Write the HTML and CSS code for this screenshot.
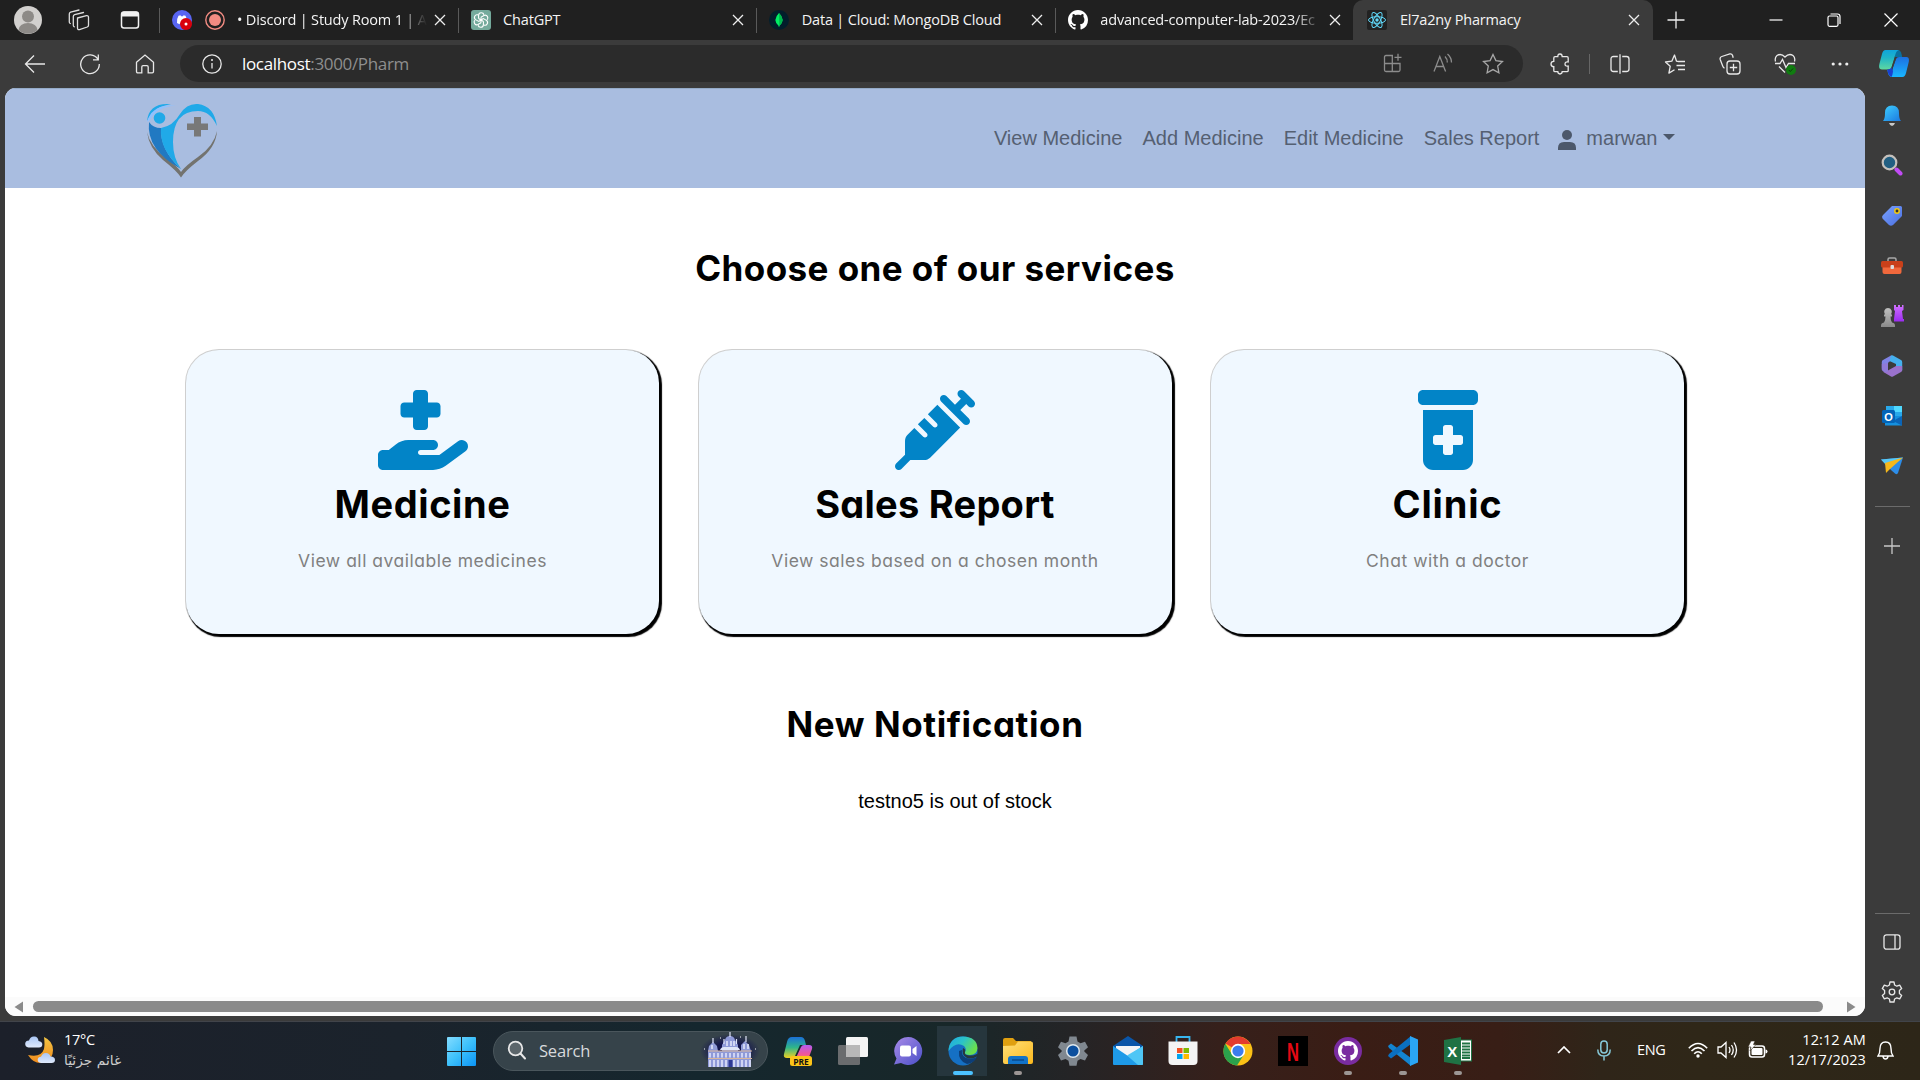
FILE: index.html
```html
<!DOCTYPE html>
<html lang="en">
<head>
<meta charset="utf-8">
<title>El7a2ny Pharmacy</title>
<link rel="stylesheet" href="styles.css">
</head>
<body>
<svg class="defs" width="0" height="0">
  <defs>
    <symbol id="x" viewBox="0 0 12 12"><path d="M1 1l10 10M11 1L1 11" fill="none" stroke="#eee" stroke-width="1.3"/></symbol>
    <symbol id="gh" viewBox="0 0 16 16"><path d="M8 0C3.58 0 0 3.58 0 8c0 3.54 2.29 6.53 5.47 7.59.4.07.55-.17.55-.38 0-.19-.01-.82-.01-1.49-2.01.37-2.53-.49-2.69-.94-.09-.23-.48-.94-.82-1.13-.28-.15-.68-.52-.01-.53.63-.01 1.08.58 1.23.82.72 1.21 1.87.87 2.33.66.07-.52.28-.87.51-1.07-1.78-.2-3.64-.89-3.64-3.95 0-.87.31-1.59.82-2.15-.08-.2-.36-1.02.08-2.12 0 0 .67-.21 2.2.82.64-.18 1.32-.27 2-.27s1.36.09 2 .27c1.53-1.04 2.2-.82 2.2-.82.44 1.1.16 1.92.08 2.12.51.56.82 1.27.82 2.15 0 3.07-1.87 3.75-3.65 3.95.29.25.54.73.54 1.48 0 1.07-.01 1.93-.01 2.2 0 .21.15.46.55.38A8.01 8.01 0 0 0 16 8c0-4.42-3.58-8-8-8"/></symbol>
    <linearGradient id="gTeal" x1="0" y1="0" x2="0" y2="1"><stop offset="0" stop-color="#0fa4dc"/><stop offset=".4" stop-color="#1fb4c8"/><stop offset="1" stop-color="#5fd8a0"/></linearGradient>
    <linearGradient id="gBlue" x1="0" y1="0" x2="0" y2="1"><stop offset="0" stop-color="#1d6fe0"/><stop offset="1" stop-color="#19b6ff"/></linearGradient>
    <linearGradient id="gBell" x1="0" y1="0" x2="1" y2="1"><stop offset="0" stop-color="#3fd0ff"/><stop offset="1" stop-color="#1a78e0"/></linearGradient>
    <linearGradient id="gPurple" x1="0" y1="0" x2="0" y2="1"><stop offset="0" stop-color="#d070ff"/><stop offset="1" stop-color="#9a2cf0"/></linearGradient>
    <linearGradient id="gGrey" x1="0" y1="0" x2="0" y2="1"><stop offset="0" stop-color="#c0c0c0"/><stop offset="1" stop-color="#8a8a8a"/></linearGradient>
    <linearGradient id="gWin" gradientUnits="userSpaceOnUse" x1="0" y1="0" x2="29" y2="29"><stop offset="0" stop-color="#83dcff"/><stop offset=".5" stop-color="#3cc0fb"/><stop offset="1" stop-color="#0b93f5"/></linearGradient>
    <linearGradient id="gChat" x1="0" y1="0" x2="1" y2="1"><stop offset="0" stop-color="#a98be8"/><stop offset="1" stop-color="#4a4fc8"/></linearGradient>
    <linearGradient id="gEdge" x1="0" y1="0" x2="1" y2="0.5"><stop offset="0" stop-color="#1fa8e4"/><stop offset=".5" stop-color="#2bc3c8"/><stop offset="1" stop-color="#6be04c"/></linearGradient>
    <linearGradient id="gFolder" x1="0" y1="0" x2="1" y2="1"><stop offset="0" stop-color="#ffe07a"/><stop offset="1" stop-color="#fbb81c"/></linearGradient>
    <linearGradient id="gMoon" x1="0" y1="0" x2="0" y2="1"><stop offset="0" stop-color="#f2c544"/><stop offset="1" stop-color="#f08a1c"/></linearGradient>
    <linearGradient id="gCloud" x1="0" y1="0" x2="0" y2="1"><stop offset="0" stop-color="#a9c6f5"/><stop offset="1" stop-color="#dfe9fb"/></linearGradient>
    <linearGradient id="gCopilot" x1="0" y1="0" x2="0" y2="1"><stop offset="0" stop-color="#1b6fd8"/><stop offset=".5" stop-color="#2fb68a"/><stop offset="1" stop-color="#f0d020"/></linearGradient>
    <linearGradient id="gCopilot2" x1="0" y1="0" x2="0" y2="1"><stop offset="0" stop-color="#b35cf0"/><stop offset=".6" stop-color="#f0569a"/><stop offset="1" stop-color="#f98a4a"/></linearGradient>
    <linearGradient id="gTag" x1="0" y1="0" x2="1" y2="1"><stop offset="0" stop-color="#7aa2ff"/><stop offset="1" stop-color="#4a6fe0"/></linearGradient>
    <radialGradient id="gNight"><stop offset=".5" stop-color="#14164e"/><stop offset="1" stop-color="#14164e" stop-opacity="0"/></radialGradient>
  </defs>
</svg>

<header class="tabstrip">
  <div class="tab-tools">
    <span class="tool"><svg width="28" height="28" viewBox="0 0 28 28"><circle cx="14" cy="14" r="14" fill="#d2d0ce"/><circle cx="14" cy="10.5" r="6" fill="#8d8a87"/><path d="M4.500 24a9.500 7 0 0 1 19 0a14 14 0 0 1-19 0z" fill="#8d8a87"/></svg></span>
    <span class="tool"><svg width="22" height="22" viewBox="0 0 22 22" fill="none" stroke="#ddd" stroke-width="1.300" stroke-linejoin="round" stroke-linecap="round"><path d="M9.500 9l9-2.300q2-.3 2 1.500v8q0 1.300-1.300 1.800l-7.700 2.600q-2 .4-2-1.500z"/><path d="M6.300 17.800q-1-.4-1-1.600V7.500q0-1.300 1.300-1.800L15.500 3.500"/><path d="M2.300 14.500q-1-.4-1-1.600V5q0-1.300 1.300-1.800L11 1"/></svg></span>
    <span class="tool"><svg width="20" height="20" viewBox="0 0 20 20"><rect x="1.500" y="2" width="17" height="16" rx="2.500" fill="none" stroke="#f2f2f2" stroke-width="1.5"/><path d="M1.500 3.500q0-2 2.500-2h12q2.500 0 2.500 2V6.500h-17z" fill="#f2f2f2"/></svg></span>
  </div>
  <div class="tab">
    <svg class="fav" width="20" height="20" viewBox="0 0 20 20"><circle cx="10" cy="10" r="10" fill="#5865f2"/><path d="M5 13q-.5-4 1.500-7.200l2-.6.500 1h2l.5-1 2 .6Q15.500 9 15 13l-2.500 1.200-.6-1H8.100l-.6 1z" fill="#fff"/><circle cx="14" cy="14" r="6" fill="#d9000c"/><circle cx="14" cy="14" r="1.500" fill="#fff"/></svg>
    <svg class="fav" width="20" height="20" viewBox="0 0 20 20"><circle cx="10" cy="10" r="9.200" fill="none" stroke="#f28b82" stroke-width="1.400"/><circle cx="10" cy="10" r="6" fill="#f28b82"/></svg>
    <span class="title fade">• Discord | Study Room 1 | A</span>
    <svg class="close" width="12" height="12"><use href="#x"/></svg>
  </div>
  <div class="tab">
    <svg class="fav" width="20" height="20" viewBox="0 0 20 20"><rect width="20" height="20" rx="3" fill="#74aa9c"/><g fill="none" stroke="#fff" stroke-width="1.100"><path id="petal" d="M10 7.200l3-1.700a2.700 2.700 0 0 1 3 4.400M10 7.200v3.400"/><use href="#petal" transform="rotate(60 10 10)"/><use href="#petal" transform="rotate(120 10 10)"/><use href="#petal" transform="rotate(180 10 10)"/><use href="#petal" transform="rotate(240 10 10)"/><use href="#petal" transform="rotate(300 10 10)"/></g></svg>
    <span class="title">ChatGPT</span>
    <svg class="close" width="12" height="12"><use href="#x"/></svg>
  </div>
  <div class="tab">
    <svg class="fav" width="20" height="20" viewBox="0 0 20 20"><circle cx="10" cy="10" r="10" fill="#021e2b"/><path d="M10 3q7 7 .3 13v1h-.6v-1Q3 10 10 3z" fill="#00ed64"/><path d="M10 3q7 7 .3 13z" fill="#00b84c"/></svg>
    <span class="title">Data | Cloud: MongoDB Cloud</span>
    <svg class="close" width="12" height="12"><use href="#x"/></svg>
  </div>
  <div class="tab">
    <svg class="fav" width="20" height="20" fill="#fff"><use href="#gh"/></svg>
    <span class="title fade repo">advanced-computer-lab-2023/Ec</span>
    <svg class="close" width="12" height="12"><use href="#x"/></svg>
  </div>
  <div class="tab active">
    <svg class="fav" width="20" height="20" viewBox="0 0 20 20"><rect width="20" height="20" rx="2" fill="#222"/><g fill="none" stroke="#61dafb" stroke-width="1"><ellipse cx="10" cy="10" rx="8.500" ry="3.300"/><ellipse cx="10" cy="10" rx="8.500" ry="3.300" transform="rotate(60 10 10)"/><ellipse cx="10" cy="10" rx="8.500" ry="3.300" transform="rotate(120 10 10)"/></g><circle cx="10" cy="10" r="1.700" fill="#61dafb"/></svg>
    <span class="title">El7a2ny Pharmacy</span>
    <svg class="close" width="12" height="12"><use href="#x"/></svg>
  </div>
  <svg class="newtab" width="18" height="18" viewBox="0 0 18 18"><path d="M9 .5v17M.5 9h17" stroke="#eee" stroke-width="1.300"/></svg>
  <div class="window-controls">
    <span><svg width="14" height="14" viewBox="0 0 14 14"><path d="M.5 7h13" stroke="#fff" stroke-width="1.200"/></svg></span>
    <span><svg width="14" height="14" viewBox="0 0 14 14" fill="none" stroke="#fff" stroke-width="1.200"><rect x="1" y="3" width="10" height="10.300" rx="1.500"/><path d="M3.500 1h7q2.500 0 2.500 2.500v7.500"/></svg></span>
    <span><svg width="14" height="14" viewBox="0 0 14 14"><path d="M.5.5l13 13M13.500.5l-13 13" stroke="#fff" stroke-width="1.200"/></svg></span>
  </div>
</header>

<div class="toolbar">
  <div class="nav-buttons">
    <span class="cell"><svg width="22" height="20" viewBox="0 0 22 20"><path d="M10 1.500L1.500 10l8.500 8.500M1.500 10H21" class="ln"/></svg></span>
    <span class="cell"><svg width="22" height="22" viewBox="0 0 22 22"><path d="M19 6.500A9.300 9.300 0 1 0 20.300 11M19.300 1.500v5.300H14" class="ln"/></svg></span>
    <span class="cell"><svg width="20" height="20" viewBox="0 0 20 20"><path d="M1.500 8.300L10 1l8.500 7.300V17.500q0 1.300-1.300 1.300H13.200V13q0-1.300-1.300-1.300H8.100Q6.800 11.700 6.800 13v5.800H2.800Q1.500 18.800 1.500 17.500z" class="ln"/></svg></span>
  </div>
  <div class="address">
    <svg width="20" height="20" viewBox="0 0 20 20"><circle cx="10" cy="10" r="9.200" class="ln"/><path d="M10 9v5.500" class="ln"/><circle cx="10" cy="6" r="1" fill="#eee"/></svg>
    <span class="url">localhost<i>:3000/Pharm</i></span>
    <div class="address-icons">
      <span><svg width="20" height="20" viewBox="0 0 20 20"><path d="M10 2.500H3Q1.500 2.500 1.500 4V17q0 1.500 1.500 1.500h12.500q1.500 0 1.500-1.500V10.500H1.500M9.300 2.500v16M15 0.800v7M11.500 4.300h7" class="ln dim"/></svg></span>
      <span><svg width="20" height="20" viewBox="0 0 20 20"><path d="M1 18.500L6.800 3.500 12.600 18.500M3 13.500h7.600M12 3.500q2.500 2.500 2.300 6M14.500 1q4 3.500 4 8.500" class="ln dim"/></svg></span>
      <span><svg width="22" height="22" viewBox="0 0 22 22"><path d="M11 1.500l2.900 6.100 6.600.9-4.800 4.600 1.200 6.700-5.900-3.200-5.900 3.200 1.200-6.700L1.500 8.500l6.600-.9z" class="ln dim2"/></svg></span>
    </div>
  </div>
  <div class="actions">
    <span class="cell"><svg width="20" height="22" viewBox="0 0 20 22"><path d="M5 3.700h2.800Q7.800 1 10 1t2.200 2.700H17q1.200 0 1.200 1.200v4q-3.200-.5-3.200 2.100t3.200 2.100v4.300q0 1.200-1.200 1.200h-4.800q0 2.400-2.200 2.400t-2.200-2.400H5q-1.200 0-1.200-1.200v-3.700Q1 13.700 1 11t2.800-2.700V4.900q0-1.200 1.200-1.200z" class="ln"/></svg></span>
    <i class="sep"></i>
    <span class="cell"><svg width="20" height="20" viewBox="0 0 20 20"><path d="M7.800 2.500H3.500Q1 2.500 1 5v10q0 2.500 2.500 2.500h4.300M12.200 2.500h4.300Q19 2.500 19 5v10q0 2.500-2.500 2.500h-4.300" class="ln"/><path d="M10 .3v19.400" class="ln"/></svg></span>
    <span class="cell"><svg width="22" height="22" viewBox="0 0 22 22"><path d="M14.500 8.500l-2-.3L10.500 2 7.800 8.200l-6.300.8 4.700 4.300-1.300 6.800 5.600-3.300M13.500 8.500H21M12.500 12.500H21M14 16.500h7" class="ln" stroke-linejoin="round"/></svg></span>
    <span class="cell"><svg width="22" height="22" viewBox="0 0 22 22"><rect x="8" y="8" width="13" height="13" rx="3" class="ln"/><path d="M14.500 10.800v7.400M10.800 14.500h7.400M5.500 15.300Q4.300 14.500 3.700 13L1.200 6.500q-.6-2.300 1.600-3L10.800.9q2-.4 2.700 1.400l.7 2.500" class="ln"/></svg></span>
    <span class="cell"><svg width="22" height="22" viewBox="0 0 22 22"><path d="M1.500 8.500Q.5 4.500 3 2.500q4-2.500 8 1.500 4-4 8-1.500 2.500 2 1.500 6M5 13.500l6 6M1 10.500h5l2.500-4 3.500 8 2.500-4H21" class="ln"/><circle cx="17" cy="17" r="5" fill="#107c10"/><path d="M14.800 17l1.500 1.500 2.700-3" stroke="#0a3d0a" fill="none"/></svg></span>
    <span class="cell"><svg width="18" height="6" viewBox="0 0 18 6" fill="#eee"><circle cx="2.200" cy="3" r="1.600"/><circle cx="9" cy="3" r="1.600"/><circle cx="15.800" cy="3" r="1.600"/></svg></span>
    <span class="copilot"><svg width="30" height="27" viewBox="0 0 30 27"><path d="M15 0h4q2.500 0 3.500 4l.7 3h-7z" fill="#0a6f9e"/><path d="M23.500 27H13q-3 0-4-4l-.7-3H13L17 9q1-2 3-2h7.500q3.500 0 2 6L27 23q-1 4-3.500 4z" fill="url(#gBlue)"/><path d="M6.500 0H20q-2.500.5-3.500 4L12.500 17.500q-.8 2-3 2H3q-4 0-2.500-6L3 4Q4 0 6.500 0z" fill="url(#gTeal)"/><path d="M8.300 19.500q3.700 0 4.700-3l1 5q-.5 4-1.500 5.400Q9 26 8.300 19.500z" fill="#1a3fd0"/><path d="M17 8.500l-4 12-.3-3.500L16 7.300z" fill="#3b3b3b"/></svg></span>
  </div>
</div>

<div class="browser-body">
  <main class="page">
    <nav class="navbar">
      <svg class="logo" width="72" height="76" viewBox="0 0 72 76">
        <path d="M1 30Q3 46 17 58q14 11 18 17.500Q39 69 52 59 70 46 71 29 68 44 52 55 39 64 35 70 31 64 20 56 4 44 1 30z" fill="#73736f"/>
        <path d="M3 20Q0 48 35 67 14 48 15 26 7 26 3 20z" fill="#2179c2"/>
        <path d="M15 26Q27 24 34 12 41 1 52 2 68 4 71 24 64 9 52 9 27 9 27 40q0 16 8 27Q13 47 15 26z" fill="#20a9e8"/>
        <path d="M1 19Q3 2 21 2l4 .7Q9 3 1 19z" fill="#20a9e8"/><path d="M1 20Q5 5 22 3.500h8Q10 5 4 18z" fill="#8fc1ff"/>
        <circle cx="13.500" cy="16" r="5.800" fill="#20a9e8"/>
        <path d="M48 15h7v6.500h7V28h-7v6.500h-7V28h-7v-6.500h7z" fill="#787878"/>
      </svg>
      <div class="links">
        <a>View Medicine</a><a>Add Medicine</a><a>Edit Medicine</a><a>Sales Report</a>
        <a class="user"><svg width="18" height="20" viewBox="0 0 18 20" fill="#4c586b"><circle cx="9" cy="5" r="5"/><path d="M0 20v-2q0-6 6-6h6q6 0 6 6v2z"/></svg>marwan<i class="caret"></i></a>
      </div>
    </nav>
    <section class="content">
      <h2 class="choose">Choose one of our services</h2>
      <div class="cards">
        <article class="card medicine">
          <svg width="90" height="80" viewBox="0 0 576 512"><path d="M224 24V80H168c-13.300 0-24 10.700-24 24v48c0 13.300 10.700 24 24 24h56v56c0 13.300 10.700 24 24 24h48c13.300 0 24-10.700 24-24V176h56c13.300 0 24-10.700 24-24V104c0-13.300-10.700-24-24-24H320V24c0-13.300-10.700-24-24-24H248c-13.300 0-24 10.700-24 24zM559.700 392.200c17.800-13.100 21.600-38.100 8.500-55.900s-38.100-21.600-55.900-8.500L392.600 416H272c-8.800 0-16-7.200-16-16s7.200-16 16-16h16 64c17.700 0 32-14.300 32-32s-14.300-32-32-32H288 272 193.700c-29.100 0-57.300 9.900-80 28L68.800 384H32c-17.700 0-32 14.300-32 32v64c0 17.700 14.300 32 32 32H192 352.500c29 0 57.300-9.300 80.700-26.500l126.600-93.300z"/></svg>
          <h3>Medicine</h3>
          <p>View all available medicines</p>
        </article>
        <article class="card sales">
          <svg width="80" height="80" viewBox="0 0 512 512"><path d="M441 7l32 32 32 32c9.400 9.400 9.400 24.600 0 33.900s-24.600 9.400-33.900 0l-15-15L417.900 128l55 55c9.400 9.400 9.400 24.600 0 33.900s-24.600 9.400-33.900 0l-72-72L295 73c-9.400-9.400-9.400-24.600 0-33.900s24.600-9.400 33.900 0l55 55L422.100 56 407 41c-9.400-9.400-9.400-24.600 0-33.900s24.600-9.400 33.900 0zM210.300 155.700l61.100-61.100c.3 .3 .6 .7 1 1l16 16 56 56 56 56 16 16c.3 .3 .6 .6 1 1l-191 191c-10.500 10.500-24.700 16.400-39.600 16.400H97.900L41 505c-9.400 9.400-24.600 9.400-33.900 0s-9.400-24.600 0-33.900l57-57V325.300c0-14.900 5.900-29.100 16.400-39.600l43.300-43.300 57 57c6.200 6.200 16.400 6.200 22.600 0s6.200-16.400 0-22.600l-57-57 41.400-41.400 57 57c6.200 6.200 16.400 6.200 22.600 0s6.200-16.400 0-22.600l-57-57z"/></svg>
          <h3>Sales Report</h3>
          <p>View sales based on a chosen month</p>
        </article>
        <article class="card clinic">
          <svg width="60" height="80" viewBox="0 0 384 512"><path d="M0 32C0 14.300 14.300 0 32 0H352c17.700 0 32 14.300 32 32V64c0 17.700-14.300 32-32 32H32C14.300 96 0 81.700 0 64V32zm32 96H352V448c0 35.300-28.700 64-64 64H96c-35.300 0-64-28.700-64-64V128zM160 240v48H112c-8.800 0-16 7.200-16 16v32c0 8.800 7.200 16 16 16h48v48c0 8.800 7.200 16 16 16h32c8.800 0 16-7.200 16-16V352h48c8.800 0 16-7.200 16-16V304c0-8.800-7.200-16-16-16H224V240c0-8.800-7.200-16-16-16H176c-8.800 0-16 7.200-16 16z"/></svg>
          <h3>Clinic</h3>
          <p>Chat with a doctor</p>
        </article>
      </div>
      <h2 class="notif">New Notification</h2>
      <p class="stock">testno5 is out of stock</p>
    </section>
    <div class="hscroll">
      <svg width="9" height="12" viewBox="0 0 9 12"><path d="M9 .5v11L0.500 6z" fill="#8a8a8a"/></svg>
      <div class="thumb"></div>
      <svg width="9" height="12" viewBox="0 0 9 12"><path d="M0 .5v11L8.500 6z" fill="#8a8a8a"/></svg>
    </div>
  </main>
  <aside class="sidebar">
    <span><svg width="20" height="22" viewBox="0 0 20 22"><path d="M1 16q2-2 2-8 0-7.500 7-7.500T17 8q0 6 2 8z" fill="url(#gBell)"/><path d="M7 18h6q-1 3-3 3t-3-3z" fill="#c8c8c8"/></svg></span>
    <span class="lens"><svg width="22" height="22" viewBox="0 0 22 22"><circle cx="8.500" cy="8.500" r="6.800" fill="#225f82" stroke="#c4c0bc" stroke-width="2.200"/><path d="M15.500 15.500l4 4" stroke="#c14bf5" stroke-width="4" stroke-linecap="round"/></svg></span>
    <span><svg width="22" height="22" viewBox="0 0 22 22"><path d="M11 1h8.500q1.500 0 1.500 1.500V11L12 20q-2 1.500-4 0L1.500 13.500q-1.200-1.800.5-3.500z" fill="url(#gTag)"/><circle cx="16" cy="6" r="2.200" fill="#333" stroke="#f2c811" stroke-width="1.500"/></svg></span>
    <span><svg width="22" height="20" viewBox="0 0 22 20"><path d="M7 6V3.500Q7 2 8.500 2h5Q15 2 15 3.500V6" fill="none" stroke="#a8a8a8" stroke-width="1.500"/><path d="M1.500 9h19v7q0 2-2 2h-15q-2 0-2-2z" fill="#f0683c"/><rect y="5" width="22" height="6.500" rx="1.500" fill="#c9401a"/><rect x="9.500" y="9" width="3.500" height="4" rx="1" fill="#ddd"/></svg></span>
    <span><svg width="24" height="24" viewBox="0 0 24 24"><path d="M14 1h2v2h2V1h2v2h2V1h1.500v5l-1.500 1 1 8h1v2.500H14V15l1-8-1-1z" fill="url(#gPurple)"/><path d="M8 4a4 4 0 0 1 3 6.500h1v2h-1.500q0 4 1.500 6 3 .5 3 3V23H1v-1.500q0-2.500 3-3 1.500-2 1.500-6H4v-2h1A4 4 0 0 1 8 4z" fill="url(#gGrey)"/></svg></span>
    <span><svg width="22" height="22" viewBox="0 0 22 22"><path d="M10 .5L2 5Q.8 5.700.8 7v8l6.200 3.500V8.500q0-1 .8-1.500L14 3.500z" fill="#7f83e6"/><path d="M10 .5q1-.6 2 0l8 4.500q1.200.7 1.200 2v8.500L15 12V9L8.500 6z" fill="#45b0ee"/><path d="M21.200 11v4q0 1.300-1.200 2l-8 4.500q-1 .6-2 0L1.500 16.500q2 .8 4-.3l9.500-5.200z" fill="#9a72cc"/><path d="M7 8v8.500q-3 1.500-5-.2Q.8 15.500.8 13V9z" fill="#8f7ad8"/></svg></span>
    <span><svg width="22" height="22" viewBox="0 0 22 22"><rect x="5" y="1" width="16" height="12" fill="#28a8ea"/><rect x="13" y="1" width="8" height="6" fill="#50d9ff"/><path d="M4 11h17v9.500H4z" fill="#1490df"/><path d="M12 16l9-5v9.500z" fill="#0a64b8"/><rect x="1" y="5" width="13" height="13" rx="1.500" fill="#0364b8"/><text x="7.500" y="15.500" class="g-o">O</text></svg></span>
    <span><svg width="22" height="18" viewBox="0 0 22 18"><path d="M0 2.500L22 .5 17 16q-1 2-3 .5L10 13z" fill="#2d8de8"/><path d="M0 2.500L22 .5 6 9z" fill="#58c8f5"/><path d="M4 6L22 .5 9 12l-4 4z" fill="#f5b81c"/></svg></span>
    <i></i>
    <span><svg width="16" height="16" viewBox="0 0 16 16"><path d="M8 0v16M0 8h16" stroke="#c8c8c8" stroke-width="1.300"/></svg></span>
    <i class="low"></i>
    <span><svg width="18" height="16" viewBox="0 0 18 16"><rect x="1" y=".8" width="16" height="14.400" rx="2.500" class="ln"/><path d="M12 1v14" class="ln"/></svg></span>
    <span><svg width="22" height="22" viewBox="0 0 22 22"><path d="M9 1h4l.6 3 2.200 1.200 2.900-1 2 3.400-2.300 2v2.800l2.300 2-2 3.400-2.900-1L13.600 18l-.6 3H9l-.6-3-2.200-1.200-2.900 1-2-3.400 2.300-2V9.600l-2.300-2 2-3.400 2.900 1L8.400 4z" class="ln" stroke-linejoin="round"/><circle cx="11" cy="11" r="2.800" class="ln"/></svg></span>
  </aside>
</div>

<footer class="taskbar">
  <div class="weather">
    <svg width="30" height="30" viewBox="0 0 30 30"><path d="M19 2q9 4 9 13 0 8-7 12-11 4-18-7 13 3 16-6 1-5 0-12z" fill="url(#gMoon)"/><path d="M3.500 12.500q-3.500-.5-3.300-4Q.5 5.500 4 5.500 5.500 1 9.500 1.500q3.500 0 4 4.500 4 .5 3.800 3.500 0 3-3.300 3z" fill="url(#gCloud)"/><path d="M16 28q-3.500-.5-3.300-3.500.3-2.500 3.300-2.700 1.500-4 5-3.800 3.500 0 4.500 3.500 4.500.3 4.500 3.500 0 3-3.500 3z" fill="url(#gCloud)"/></svg>
    <div class="weather-text"><b>17°C</b><span dir="rtl">غائم جزئيًا</span></div>
  </div>
  <svg class="start" width="29" height="29" viewBox="0 0 29 29" fill="url(#gWin)"><path d="M0 1q0-1 1-1h13v14H0zM15 0h13q1 0 1 1v13H15zM0 15h14v14H1q-1 0-1-1zM15 15h14v13q0 1-1 1H15z"/></svg>
  <div class="search">
    <svg width="20" height="20" viewBox="0 0 20 20"><circle cx="8.500" cy="8.500" r="6.800" fill="#5c666b" stroke="#e8e8e8" stroke-width="1.800"/><path d="M13.500 13.500l4.500 5" stroke="#e8e8e8" stroke-width="2" stroke-linecap="round"/></svg>
    <span>Search</span>
    <svg width="60" height="36" viewBox="0 0 60 36"><ellipse cx="30" cy="19" rx="30" ry="17" fill="url(#gNight)"/><path d="M8 35V19l1-5 4-4 4 4 1 5h4v-6l3-5q1-4 5-4t5 4l3 5v6h3v-6l4-4 4 4 2 6v16z" fill="#8f9ad8"/><path d="M20 18q1-3 4-3h12q3 0 4 3z" fill="#dfe5f8"/><path d="M8 19h44M8 26.500h44" stroke="#d9b79c" stroke-width="1"/><path d="M10 21v4.500M14 21v4.500M18 21v4.500M22 21v4.500M26 21v4.500M30 21v4.500M34 21v4.500M38 21v4.500M42 21v4.500M46 21v4.500M50 21v4.500M10 28v7M14 28v7M18 28v7M22 28v7M26 28v7M34 28v7M38 28v7M42 28v7M46 28v7M50 28v7M27 9v5M31 9v5M34 9v5M12 13v4M44 12v5M48 12v5" stroke="#e6e9fb" stroke-width="1.500"/><path d="M28.500 28h4v7h-4z" fill="#2e3a96"/><path d="M13 6v5M30 0v5M46 4v6M24 7v5M36.500 7v5" stroke="#dfe5f8" stroke-width="1.200"/><path d="M4 17h1M55 17h1M20 6h1M40 5h1" stroke="#fff"/></svg>
  </div>
  <div class="apps">
    <span><svg width="30" height="30" viewBox="0 0 30 30"><path d="M9 1h9q3 0 4 4l1 4h-6l-5 11q-1 2-4 2H4q-4 0-3-4L4 6q1-5 5-5z" fill="url(#gCopilot)"/><path d="M21 24H12l6-13q1-2 3-2h5q4 0 3 4l-3 8q-1 3-5 3z" fill="url(#gCopilot2)"/><rect x="7" y="20" width="22" height="10" rx="2.500" fill="#fcc419"/><text x="18" y="28.500" class="g-pre">PRE</text></svg></span>
    <span><svg width="30" height="30" viewBox="0 0 30 30"><rect x="8" y="1" width="22" height="20" rx="1.500" fill="#f4f4f4"/><rect x="0" y="9" width="22" height="20" rx="1.500" fill="#6a6c6e"/><path d="M8 9h14v12H8z" fill="#b8b8b8"/></svg></span>
    <span><svg width="30" height="30" viewBox="0 0 30 30"><path d="M15 1a14 14 0 1 1-7 26l-7 1.500 2.500-6A14 14 0 0 1 15 1z" fill="url(#gChat)"/><rect x="7" y="9.500" width="11" height="11" rx="2" fill="#fff"/><path d="M19.500 13l4-3v10l-4-3z" fill="#fff"/></svg></span>
    <span class="active"><svg width="30" height="30" viewBox="0 0 30 30"><circle cx="15" cy="15" r="14.500" fill="#1570c4"/><path d="M.5 15Q1 1 15 .5 29 1 29.500 12q-.5 7-7.500 7-6 0-5-3 2-3-1-6Q8 5 .5 15z" fill="url(#gEdge)"/><path d="M11 15q-1 10 8 13 7-1 10-7-5 3-11 1-5-3-4-8z" fill="#0d3e78"/><path d="M15 12q3 1 2 4-1 3 4 3.500 4 .5 8-1.500l1 1.500-2 1.500q-4 2.500-9 1-6-3-4-10z" fill="#26363d"/></svg></span>
    <span class="open"><svg width="30" height="30" viewBox="0 0 30 30"><path d="M0 4q0-2 2-2h8l3 3h15v5H0z" fill="#e0a010"/><path d="M0 10l12-.5 3-4h13q2 0 2 2V26q0 2-2 2H2q-2 0-2-2z" fill="url(#gFolder)"/><path d="M5 28v-5q0-3 3-3h14q3 0 3 3v5z" fill="#1273c8"/><path d="M9 24h12" stroke="#0a4a8c" stroke-width="1.500"/></svg></span>
    <span><svg width="30" height="30" viewBox="0 0 30 30"><path d="M11.500 0.500h7l1 5 3 1.800 4.500-1.600 3 5.500-3.700 3.300v1l3.700 3.500-3 5.500-4.500-1.600-3 1.800-1 5h-7l-1-5-3-1.800L3 24.500 0 19l3.700-3.500v-1L0 11.200l3-5.500 4.500 1.600 3-1.800z" fill="#808890"/><circle cx="15" cy="15" r="6.300" fill="#0b4f9e" stroke="#dfe8ee" stroke-width="1.500"/></svg></span>
    <span><svg width="30" height="30" viewBox="0 0 30 30"><path d="M0 10L15 0l15 10v5H0z" fill="#0a55a8"/><path d="M3 10h24v8l-12 6-12-6z" fill="#f2f4f6"/><path d="M0 10l15 10L30 10v18q0 1-1 1H1q-1 0-1-1z" fill="#1e9ae8"/><path d="M30 10v18q0 1-1 1H25L14 19.500z" fill="#4fc6f5"/></svg></span>
    <span><svg width="30" height="30" viewBox="0 0 30 30"><path d="M8.500 6V1h13v5" fill="none" stroke="#38b6f0" stroke-width="1.800"/><path d="M0.500 5.500h29V25q0 4-4 4h-21q-4 0-4-4z" fill="#f4f4f4"/><path d="M9 12h5.500v5H9z" fill="#f25022"/><path d="M15.500 12H21v5h-5.500z" fill="#7fba00"/><path d="M9 18h5.500v5H9z" fill="#00a4ef"/><path d="M15.500 18H21v5h-5.500z" fill="#ffb900"/></svg></span>
    <span><svg width="30" height="30" viewBox="0 0 30 30"><circle cx="15" cy="15" r="14.500" fill="#fbc116"/><path d="M15 15L2.500 7.500A14.500 14.500 0 0 1 27.500 8H15z" fill="#e33b2e"/><path d="M2.300 7.800A14.500 14.500 0 0 0 14 29.500l7-11H9z" fill="#2ba24c"/><circle cx="15" cy="15" r="7.200" fill="#fff"/><circle cx="15" cy="15" r="5.600" fill="#3b7ded"/></svg></span>
    <span><svg width="30" height="30" viewBox="0 0 30 30"><rect width="30" height="30" fill="#000"/><text x="15" y="24.500" class="g-n" textLength="12" lengthAdjust="spacingAndGlyphs">N</text></svg></span>
    <span class="open"><svg width="30" height="30" viewBox="0 0 30 30"><circle cx="15" cy="15" r="14" fill="#7a2ca0"/><svg x="5" y="5" width="20" height="20" fill="#fff"><use href="#gh"/></svg></svg></span>
    <span class="open"><svg width="30" height="30" viewBox="0 0 30 30"><path d="M0 10l3-2.500L23 22v8L1 12z" fill="#1384d0"/><path d="M0 20l3 2.500L23 8V0L1 18z" fill="#0b6fc0"/><path d="M22 0l8 3.500v23L22 30z" fill="#2aa5f5"/></svg></span>
    <span class="open"><svg width="28" height="28" viewBox="0 0 28 28"><rect x="14" y="3" width="13.500" height="21" fill="#fff" stroke="#1f7244"/><path d="M18 6.500h8M18 9.500h8M18 12.500h8M18 15.500h8M18 18.500h8M18 21h8" stroke="#1f7244" stroke-width="1.800"/><path d="M0 3L17 0v28L0 25z" fill="#1f7244"/><text x="8.300" y="19.500" class="g-x">X</text></svg></span>
  </div>
  <div class="tray">
    <svg class="chev" width="14" height="8" viewBox="0 0 14 8"><path d="M1 7l6-6 6 6" fill="none" stroke="#fff" stroke-width="1.700"/></svg>
    <svg class="mic" width="14" height="21" viewBox="0 0 14 21"><rect x="3.800" y="1" width="6.400" height="12" rx="3.200" fill="none" stroke="#86c8d8" stroke-width="1.500"/><path d="M.8 9.500q0 6.500 6.200 6.500t6.200-6.500M7 16v4.500" fill="none" stroke="#86c8d8" stroke-width="1.500"/></svg>
    <span class="lang">ENG</span>
    <svg class="wifi" width="20" height="16" viewBox="0 0 20 16"><path d="M.8 6.300q9.200-9.500 18.400 0M3.500 9q6.500-6.800 13 0M6.200 11.700q3.800-4 7.600 0" fill="none" stroke="#fff" stroke-width="1.600"/><circle cx="10" cy="14" r="1.700" fill="#fff"/></svg>
    <svg class="vol" width="21" height="18" viewBox="0 0 21 18"><path d="M1 6h3l5-4.500v15L4 12H1zM12 6q2 3 0 6M14.500 4q3.500 5 0 10M17 1.500q5 7.500 0 15" fill="none" stroke="#fff" stroke-width="1.300"/></svg>
    <svg class="bat" width="20" height="18" viewBox="0 0 20 18"><rect x="1.500" y="5" width="15" height="11" rx="2.500" fill="none" stroke="#fff" stroke-width="1.500"/><rect x="3.500" y="7" width="11" height="7" rx="1" fill="#fff"/><path d="M17.500 8.500q2 0 2 2t-2 2z" fill="#fff"/><path d="M3 0h4L5.500 3.500H8L2 10l1-4H0z" fill="#fff" stroke="#2f2718" stroke-width=".6"/></svg>
    <div class="clock"><span>12:12 AM</span><span>12/17/2023</span></div>
    <svg class="bell" width="17" height="19" viewBox="0 0 17 19"><path d="M1 15q2-2.500 2-7.500Q3 1 8.500 1T14 7.500q0 5 2 7.500zM6 15.500q.5 2.500 2.500 2.500t2.500-2.500" fill="none" stroke="#fff" stroke-width="1.400"/></svg>
  </div>
</footer>
</body>
</html>
```
FILE: styles.css
```css
* { box-sizing: border-box; margin: 0; padding: 0; }
body {
  width: 1920px; height: 1080px; overflow: hidden;
  display: flex; flex-direction: column;
  background: #3b3b3b;
  font-family: "Open Sans", "Noto Sans", sans-serif;
  color: #fff;
}
svg { display: block; flex: none; }
i { font-style: normal; }
.defs { position: absolute; }
.ln { fill: none; stroke: #e8e8e8; stroke-width: 1.3; }
.dim { stroke: #8c8c8c; }
.dim2 { stroke: #a8a8a8; }

/* Tab strip */
.tabstrip { height: 40px; display: flex; align-items: center; background: #202020; }
.tab-tools { width: 159px; display: flex; align-items: center; padding-left: 2px; }
.tool { width: 51px; display: flex; justify-content: center; }
.tab { width: 298.6px; height: 40px; display: flex; align-items: center; padding: 0 12px 0 13px; background: linear-gradient(#5a5a5a, #5a5a5a) 0 8px / 1px 25px no-repeat; }
.tab .fav { margin-right: 12.500px; }
.title { flex: 1; min-width: 0; white-space: nowrap; font-size: 14.5px; letter-spacing: -0.18px; line-height: 20px; color: #f4f4f4; margin-right: 7px; }
.repo { letter-spacing: -0.16px; }
.fade { mask-image: linear-gradient(90deg, #000 calc(100% - 28px), transparent); }
.tab.active { width: 300px; background: #3b3b3b; border-radius: 10px 10px 0 0; padding-left: 14px; padding-right: 13px; }
.newtab { margin-left: 13.500px; }
.window-controls { margin-left: auto; display: flex; }
.window-controls span { width: 57.500px; display: flex; justify-content: center; }

/* Toolbar */
.toolbar { height: 48px; display: flex; align-items: center; padding: 0 0 1px 7.5px; background: #3b3b3b; }
.nav-buttons, .actions { display: flex; align-items: center; }
.cell { width: 55px; display: flex; justify-content: center; }
.address { width: 1343px; height: 37px; margin: 0 9.500px 0 7.5px; border-radius: 19px; background: #2b2b2b; display: flex; align-items: center; padding: 0 5px 0 22px; }
.url { margin-left: 20px; font-size: 17px; letter-spacing: -0.33px; line-height: 24px; }
.url i { color: #8e8e8e; }
.address-icons { margin-left: auto; display: flex; }
.address-icons span { width: 50px; display: flex; justify-content: center; }
.sep { width: 1px; height: 20px; margin: 0 2px; background: #666; }
.copilot { width: 53px; display: flex; justify-content: center; }

/* Browser body */
.browser-body { height: 933px; display: flex; padding-left: 5px; }
.page { width: 1860px; height: 928px; display: flex; flex-direction: column; border-radius: 11px; overflow: hidden; background: #fff; color: #000; }
.navbar { height: 100px; display: flex; align-items: center; justify-content: space-between; padding: 2px 190px 0 141px; background: #a9bde0; border-top: 1px solid #94abc8; }
.links { display: flex; gap: 20px; padding-bottom: 3px; font: 20px/30px "Liberation Sans", Arial, sans-serif; color: #556072; }
.user { display: flex; align-items: center; }
.user svg { margin: 4px 10px 0 -1px; }
.caret { border: 6px solid transparent; border-top-color: #4c586b; border-bottom: 0; margin: -3px 0 0 5.500px; }
.content { flex: 1; padding-top: 58px; font-family: Inter, sans-serif; font-feature-settings: "cv11"; text-align: center; }
h2 { font-size: 35px; line-height: 44px; font-weight: 700; }
.choose { letter-spacing: 0.45px; }
.notif { letter-spacing: 0.6px; }
.cards { display: flex; justify-content: space-between; width: 1498px; margin: 60px 0 68px 181px; }
.card { width: 473px; height: 284px; padding-top: 40px; display: flex; flex-direction: column; align-items: center; border-radius: 33px; background: #f0f8ff; box-shadow: 2px 2px 1px 0.6px #000, 0 0 0 1px #cfcfcf; }
.card svg { fill: #0284c7; }
h3 { margin-top: 10px; font-size: 38px; line-height: 48px; font-weight: 700; }
.card p { margin-top: 19px; font-size: 17.5px; line-height: 28px; letter-spacing: 0.52px; color: #808080; }
.medicine h3 { letter-spacing: 0.6px; }
.sales h3 { letter-spacing: 0.25px; }
.clinic h3 { letter-spacing: 0.8px; }
.stock { margin-top: 43px; padding-left: 40px; font: 20px/24px "Liberation Sans", Arial, sans-serif; }
.hscroll { height: 19px; display: flex; align-items: center; padding: 0 9px; background: #fbfbfb; }
.thumb { width: 1790px; height: 11px; margin: 0 24px 0 10px; border-radius: 6px; background: #8a8a8a; }

/* Sidebar */
.sidebar { width: 54px; display: flex; flex-direction: column; align-items: center; padding-top: 3px; }
.sidebar span { height: 50px; display: flex; align-items: center; justify-content: center; }
.sidebar .lens { padding-bottom: 3px; }
.sidebar i { width: 35px; height: 1px; background: #6b6b6b; margin: 15px 0 14px; }
.sidebar i.low { margin: auto 0 3px; }
.sidebar span:last-child { margin-bottom: 4px; }
.g-o { font: 700 11px "Liberation Sans"; fill: #fff; text-anchor: middle; }

/* Taskbar */
.taskbar { height: 59px; display: flex; align-items: center; border-top: 1px solid #41444a; background: linear-gradient(90deg, #1c202a 0, #1b232c 400px, #15272e 700px, #182729 950px, #242426 1070px, #36201b 1220px, #3a1d15 1350px, #381e16 1500px, #2f2519 1600px, #2f2718 1700px, #2d2618 1920px); }
.weather { display: flex; align-items: center; width: 447px; padding: 0 0 2px 25px; gap: 9px; }
.weather-text { display: flex; flex-direction: column; align-items: flex-start; font-size: 14.5px; line-height: 20px; }
.weather-text b { font-weight: 400; letter-spacing: -0.3px; }
.weather-text span { color: #ccc; font-family: "DejaVu Sans", sans-serif; font-size: 13.800px; }
.search { width: 275px; height: 40px; margin-left: 17px; padding: 0 7px 2px 13px; display: flex; align-items: center; border-radius: 20px; background: #36434a; border: 1px solid #4a565c; color: #d8dadc; font-size: 16.500px; }
.search span { margin: 0 auto 0 12px; letter-spacing: -0.2px; }
.apps { display: flex; margin-left: 2px; }
.apps span { position: relative; width: 55px; height: 50px; display: flex; align-items: center; justify-content: center; }
.apps .active { background: linear-gradient(#26363d, #26363d) 2px 0 / 50px 50px no-repeat; }
.apps .active::after, .apps .open::after { content: ""; position: absolute; bottom: 1px; left: 17.500px; width: 20px; height: 4px; border-radius: 2px; background: #4cc2ff; }
.apps .open::after { left: 23.500px; width: 8px; background: #9c9694; }
.g-pre { font: 700 8.500px "Open Sans"; fill: #111; text-anchor: middle; }
.g-n { font: 700 26px "Liberation Sans"; fill: #e50914; text-anchor: middle; }
.g-x { font: 700 15px "Liberation Sans"; fill: #fff; text-anchor: middle; }
.tray { display: flex; align-items: center; margin-left: auto; padding: 0 26px 2px 0; font-size: 14.5px; line-height: 20px; }
.mic { margin-left: 26px; }
.lang { margin: 0 22px 0 26px; letter-spacing: -0.3px; width: 29px; }
.vol { margin-left: 9px; }
.bat { margin-left: 10px; }
.clock { display: flex; flex-direction: column; align-items: flex-end; width: 98px; letter-spacing: 0.1px; }
.bell { margin-left: 11px; }
```
